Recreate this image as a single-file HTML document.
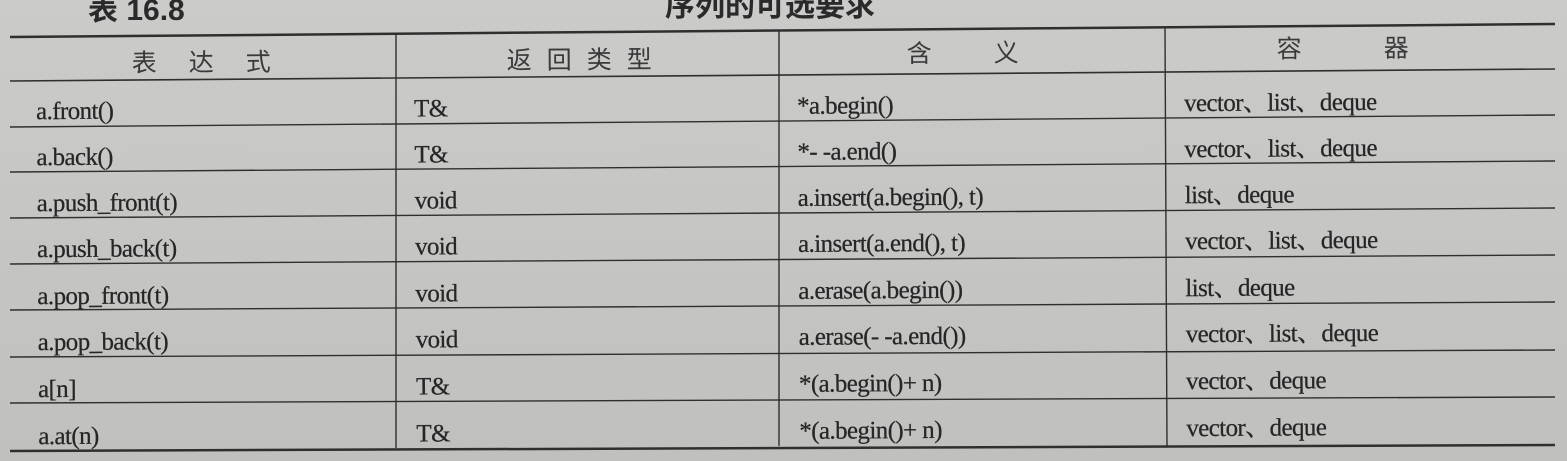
<!DOCTYPE html>
<html><head><meta charset="utf-8"><style>
html,body{margin:0;padding:0;background:#c4c4c2;}
svg{display:block;}
text{font-family:"Liberation Serif","Noto Serif CJK SC",serif;font-size:25px;letter-spacing:-0.6px;fill:#262626;stroke:#262626;stroke-width:0.25px;}
.h{font-family:"Liberation Sans","Noto Sans CJK SC",sans-serif;font-size:25px;letter-spacing:0;fill:#3a3a3a;stroke:none;}
.t{font-family:"Liberation Sans","Noto Sans CJK SC",sans-serif;font-size:30px;font-weight:bold;letter-spacing:0;fill:#2a2a2a;stroke:none;}
</style></head><body>
<svg width="1567" height="461" viewBox="0 0 1567 461" xmlns="http://www.w3.org/2000/svg">
<defs><linearGradient id="bg" x1="0" y1="0" x2="0" y2="1"><stop offset="0" stop-color="#cbcbc9"/><stop offset="1" stop-color="#c0c0be"/></linearGradient></defs>
<rect width="1567" height="461" fill="url(#bg)"/>
<text class="t" x="88" y="20">表 16.8</text>
<text class="t" x="665" y="16">序列的可选要求</text>
<g stroke="#2f2f2f" fill="none">
<line x1="10" y1="37" x2="1555" y2="24" stroke-width="2.5"/>
<line x1="10" y1="81" x2="1555" y2="69" stroke-width="1.6"/>
<line x1="10" y1="127" x2="1555" y2="115" stroke-width="1.4"/>
<line x1="10" y1="172" x2="1555" y2="161" stroke-width="1.4"/>
<line x1="10" y1="218" x2="1555" y2="208" stroke-width="1.4"/>
<line x1="10" y1="264" x2="1555" y2="255" stroke-width="1.4"/>
<line x1="10" y1="310" x2="1555" y2="302" stroke-width="1.4"/>
<line x1="10" y1="357" x2="1555" y2="350" stroke-width="1.4"/>
<line x1="10" y1="403" x2="1555" y2="397" stroke-width="1.4"/>
<line x1="10" y1="451" x2="1555" y2="445" stroke-width="2.5"/>
<line x1="396" y1="34" x2="396" y2="448" stroke-width="1.4"/>
<line x1="779" y1="31" x2="779" y2="446" stroke-width="1.4"/>
<line x1="1165" y1="28" x2="1167" y2="447" stroke-width="1.4"/>
</g>
<g transform="rotate(-0.4 780 240)">
<text class="h" x="133" y="67">表</text><text class="h" x="190" y="67">达</text><text class="h" x="247" y="67">式</text>
<text class="h" x="508" y="67">返</text><text class="h" x="548" y="67">回</text><text class="h" x="588" y="67">类</text><text class="h" x="628" y="67">型</text>
<text class="h" x="908" y="63">含</text><text class="h" x="995" y="63">义</text>
<text class="h" x="1278" y="61">容</text><text class="h" x="1385" y="61">器</text>
<g>
<text x="37" y="114">a.front()</text><text x="415" y="114">T&amp;</text><text x="798" y="114">*a.begin()</text><text x="1185" y="114">vector、list、deque</text>
<text x="37" y="160">a.back()</text><text x="415" y="160">T&amp;</text><text x="798" y="160">*- -a.end()</text><text x="1185" y="160">vector、list、deque</text>
<text x="37" y="206">a.push_front(t)</text><text x="415" y="206">void</text><text x="798" y="206">a.insert(a.begin(), t)</text><text x="1185" y="206">list、deque</text>
<text x="37" y="252">a.push_back(t)</text><text x="415" y="252">void</text><text x="798" y="252">a.insert(a.end(), t)</text><text x="1185" y="252">vector、list、deque</text>
<text x="37" y="299">a.pop_front(t)</text><text x="415" y="299">void</text><text x="798" y="299">a.erase(a.begin())</text><text x="1185" y="299">list、deque</text>
<text x="37" y="345">a.pop_back(t)</text><text x="415" y="345">void</text><text x="798" y="345">a.erase(- -a.end())</text><text x="1185" y="345">vector、list、deque</text>
<text x="37" y="392">a[n]</text><text x="415" y="392">T&amp;</text><text x="798" y="392">*(a.begin()+ n)</text><text x="1185" y="392">vector、deque</text>
<text x="37" y="439">a.at(n)</text><text x="415" y="439">T&amp;</text><text x="798" y="439">*(a.begin()+ n)</text><text x="1185" y="439">vector、deque</text>
</g>
</g>
</svg>
</body></html>
